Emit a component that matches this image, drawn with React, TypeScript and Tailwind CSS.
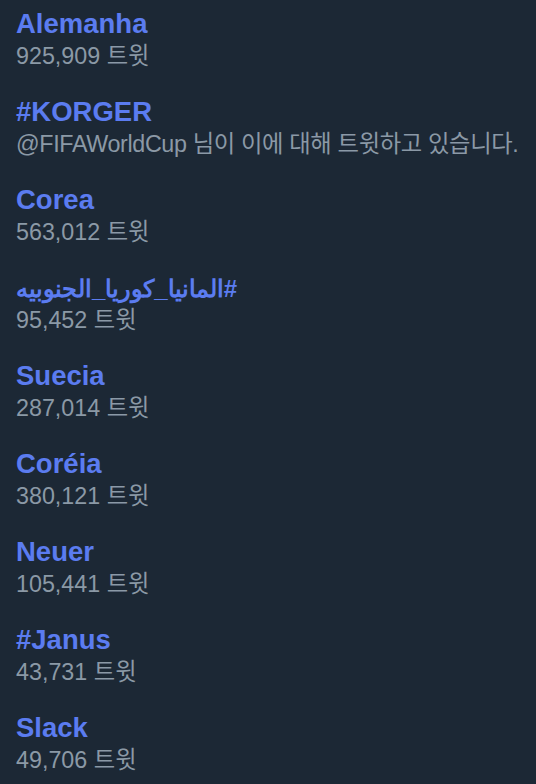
import React from 'react';

type Trend = {
  name: string;
  meta: string;
  rtl?: boolean;
  tight?: boolean;
};

const trends: Trend[] = [
  { name: 'Alemanha', meta: '925,909 트윗' },
  { name: '#KORGER', meta: '@FIFAWorldCup 님이 이에 대해 트윗하고 있습니다.', tight: true },
  { name: 'Corea', meta: '563,012 트윗' },
  { name: '#المانيا_كوريا_الجنوبيه', meta: '95,452 트윗', rtl: true },
  { name: 'Suecia', meta: '287,014 트윗' },
  { name: 'Coréia', meta: '380,121 트윗' },
  { name: 'Neuer', meta: '105,441 트윗' },
  { name: '#Janus', meta: '43,731 트윗' },
  { name: 'Slack', meta: '49,706 트윗' },
];

export default function App() {
  return (
    <main className="min-h-[784px] w-full bg-[#1c2835] pt-[7px] font-['Liberation_Sans','Noto_Sans_CJK_KR',sans-serif]">
      <ul>
        {trends.map((t) => (
          <li key={t.name} className="h-[88px] px-4">
            {/* trend name */}
            <div className="h-[33px] text-[27.5px] leading-[33px] font-bold text-[#5b7cf0]">
              {t.rtl ? (
                <span dir="rtl" className="inline-block text-[24px] font-semibold">
                  {t.name}
                </span>
              ) : (
                t.name
              )}
            </div>
            {/* tweet count / context */}
            <div
              className={
                t.tight
                  ? 'h-[33px] text-[23.3px] leading-[33px] tracking-[-0.35px] text-[#8b99a6] whitespace-nowrap'
                  : 'h-[33px] text-[23.3px] leading-[33px] text-[#8b99a6] whitespace-nowrap'
              }
            >
              {t.meta}
            </div>
          </li>
        ))}
      </ul>
    </main>
  );
}
